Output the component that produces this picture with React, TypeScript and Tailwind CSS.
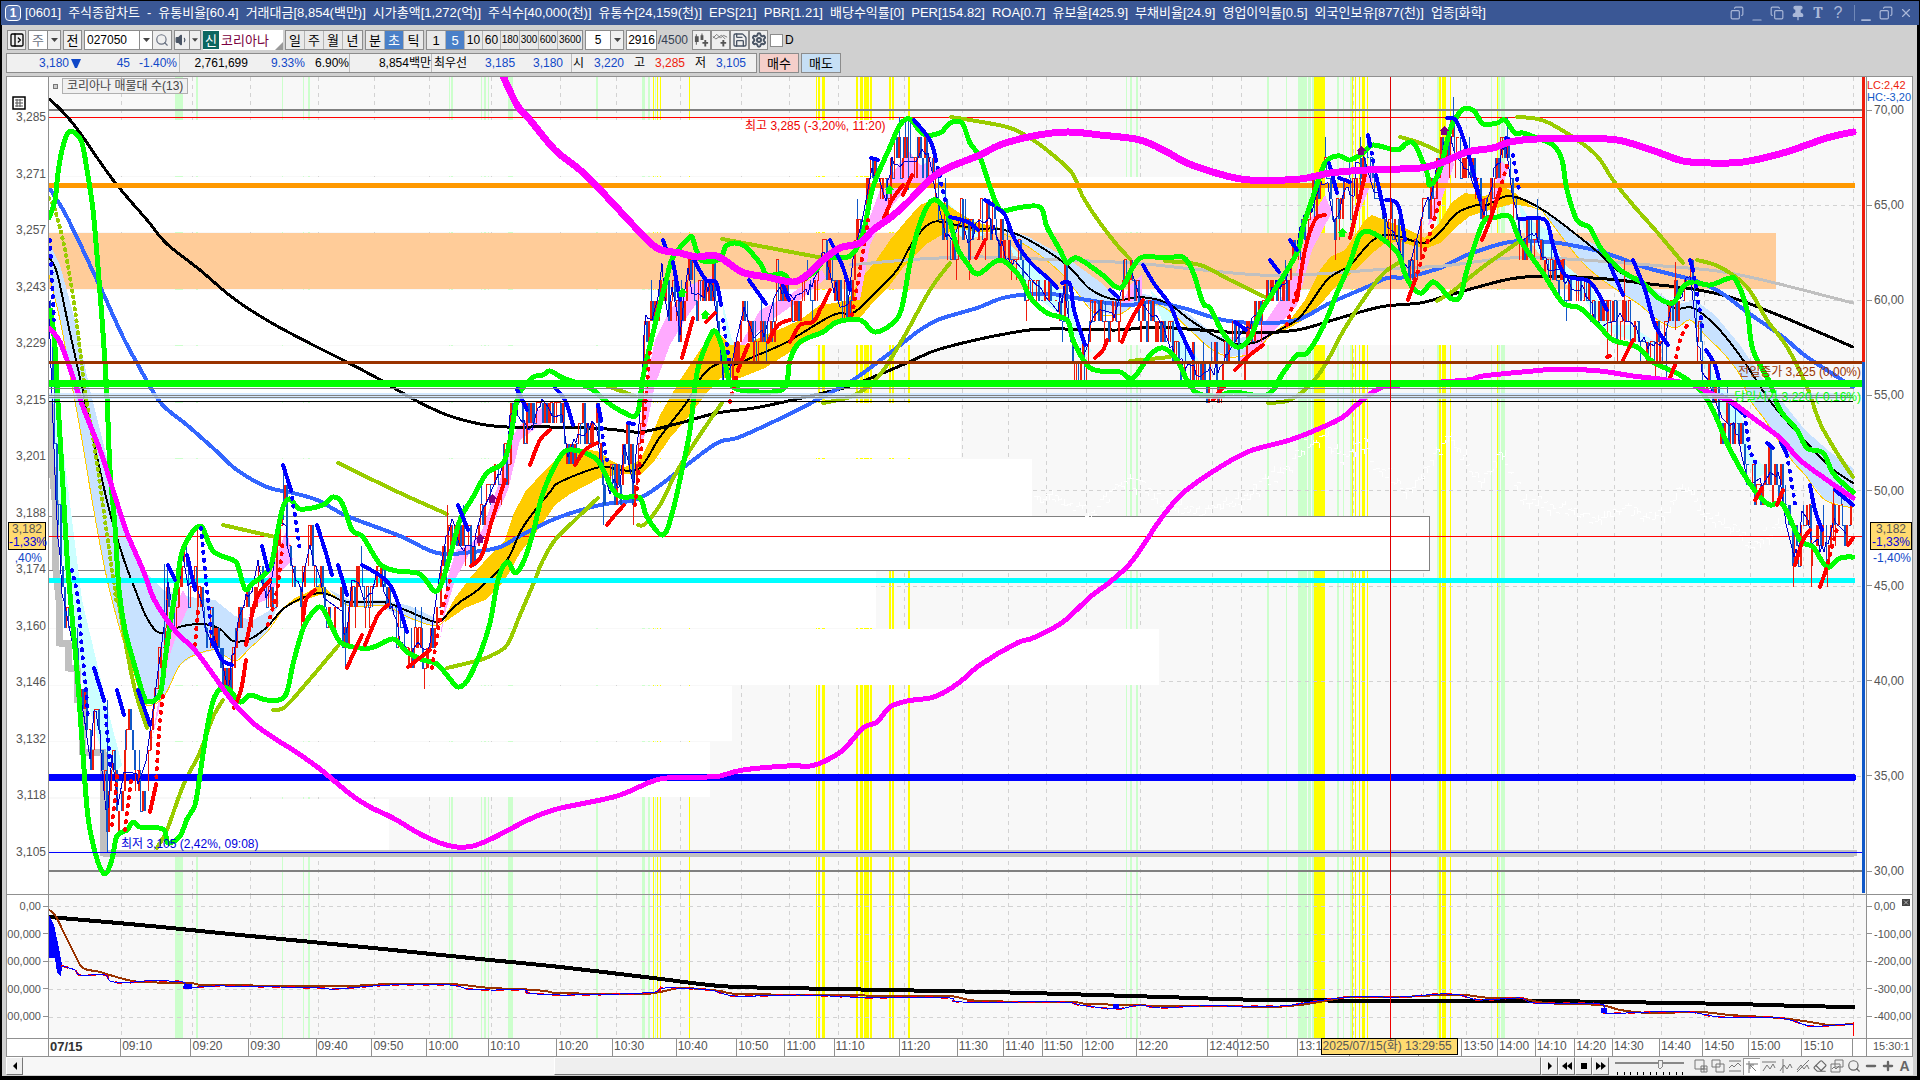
import type { ReactNode } from "react";
import {
  ChevronDown,
  Copy,
  Eraser,
  Minus,
  PanelLeftOpen,
  Pin,
  Plus,
  Save,
  Search,
  Settings,
  Volume1,
  X,
} from "lucide-react";

type Pt = [number, number];

const TITLE = [
  "[0601]", "주식종합차트", "-", "유통비율[60.4]", "거래대금[8,854(백만)]", "시가총액[1,272(억)]", "주식수[40,000(천)]",
  "유통수[24,159(천)]", "EPS[21]", "PBR[1.21]", "배당수익률[0]", "PER[154.82]", "ROA[0.7]", "유보율[425.9]", "부채비율[24.9]",
  "영업이익률[0.5]", "외국인보유[877(천)]", "업종[화학]",
];

const PRICE_TICKS = ["3,285", "3,271", "3,257", "3,243", "3,229", "3,215", "3,201", "3,188", "3,174", "3,160", "3,146", "3,132", "3,118", "3,105"];
const RATE_TICKS = ["70,00", "65,00", "60,00", "55,00", "50,00", "45,00", "40,00", "35,00", "30,00"];
const SUB_LEFT = ["0,00", "00,000", "00,000", "00,000", "00,000"];
const SUB_RIGHT = ["0,00", "-100,00", "-200,00", "-300,00", "-400,00"];

// label, x where the cell starts
const TIMES: [string, number][] = [
  ["07/15", 48], ["09:10", 121], ["09:20", 192], ["09:30", 250], ["09:40", 318], ["09:50", 374], ["10:00", 429],
  ["10:10", 491], ["10:20", 560], ["10:30", 616], ["10:40", 680], ["10:50", 741], ["11:00", 789], ["11:10", 838],
  ["11:20", 904], ["11:30", 962], ["11:40", 1008], ["11:50", 1046], ["12:00", 1086], ["12:20", 1140], ["12:40", 1212],
  ["12:50", 1241], ["13:1", 1301], ["", 1353], ["", 1423], ["13:50", 1466], ["14:00", 1501], ["14:10", 1538],
  ["14:20", 1577], ["14:30", 1614], ["14:40", 1661], ["14:50", 1704], ["15:00", 1750], ["15:10", 1803], ["", 1853],
];
const PLOT_END = 1866;

// signal bands: x, width
const GREEN_BANDS: Pt[] = [
  [175, 8], [196, 2], [282, 1], [303, 1], [308, 2], [449, 1], [451, 2], [481, 1], [484, 2], [488, 1], [508, 5], [596, 2],
  [642, 3], [648, 2], [655, 1], [1126, 1], [1130, 2], [1136, 2], [1267, 2], [1286, 1], [1298, 9], [1308, 3], [1312, 2],
  [1337, 2], [1343, 1], [1350, 2], [1437, 2], [1491, 1], [1498, 2], [1501, 4],
];
const YELLOW_BANDS: Pt[] = [
  [653, 1], [657, 1], [660, 1], [689, 1], [816, 1], [818, 2], [822, 3], [856, 2], [860, 3], [864, 5], [870, 2], [889, 2],
  [892, 2], [908, 2], [1314, 11], [1352, 1], [1355, 1], [1359, 1], [1362, 3], [1367, 1], [1439, 2], [1442, 4], [1450, 1],
  [1497, 1],
];

// volume profile rows: top, bottom, right edge
const PROFILE: [number, number, number][] = [
  [120, 176, 915], [177, 232, 1241], [290, 345, 1600], [346, 402, 817], [403, 458, 961], [459, 516, 1032],
  [571, 628, 876], [629, 685, 1159], [686, 741, 732], [742, 797, 710], [799, 850, 389],
];

const MAGENTA_HIGH = "503,76 517,105 530,120 555,150 580,170 607,197 633,225 657,248 680,253 697,257 717,256 742,272 767,277 793,282 807,275 823,260 840,248 860,243 873,230 890,218 907,203 933,177 950,167 980,155 1000,145 1033,136 1067,132 1100,135 1140,140 1167,152 1187,163 1223,175 1250,180 1300,179 1330,173 1367,170 1420,168 1443,162 1467,152 1493,148 1510,142 1537,139 1607,139 1633,144 1660,153 1683,161 1710,163 1743,162 1783,153 1827,138 1853,132";
const MAGENTA_LOW = "50,329 60,342 73,377 83,407 100,450 113,490 127,533 143,570 153,597 163,614 177,633 193,648 207,666 233,702 253,723 277,740 293,750 320,769 350,794 370,807 393,818 420,834 440,843 457,847 473,846 493,838 530,819 557,809 617,796 660,779 707,777 720,776 743,770 787,766 810,766 823,762 843,750 863,728 877,722 890,707 907,701 930,698 943,693 960,682 980,665 1017,643 1033,638 1063,622 1090,597 1110,582 1133,560 1160,520 1183,493 1220,467 1250,451 1290,440 1323,427 1343,417 1360,402 1380,388 1400,385 1467,380 1483,376 1533,371 1560,369 1600,371 1633,376 1667,380 1693,385 1710,393 1733,403 1753,418 1780,438 1800,460 1827,480 1853,498";
const BLACK_LONG = "49,99 61,110 78,130 113,180 147,220 167,244 200,270 233,298 270,322 313,345 343,360 377,378 413,399 447,415 480,424 507,427 550,427 607,429 640,432 680,423 717,413 760,407 823,393 853,385 907,363 940,349 1010,333 1050,329 1117,330 1153,327 1200,330 1250,333 1297,330 1333,320 1380,307 1420,303 1443,297 1467,290 1510,279 1547,276 1607,279 1650,284 1693,289 1733,298 1783,317 1853,347";
const BLACK_MID = "49,258 57,273 70,333 82,387 97,457 110,513 123,557 138,597 147,618 160,633 183,626 203,624 220,629 233,641 250,639 267,627 287,606 320,593 347,602 383,602 410,612 437,622 450,611 460,602 480,588 507,560 523,527 550,492 560,482 600,467 620,470 640,468 660,437 687,402 703,375 720,363 733,365 753,357 787,342 833,315 853,313 873,295 897,270 913,242 933,222 960,226 977,229 1000,229 1027,239 1067,265 1090,289 1117,300 1140,297 1167,303 1193,322 1227,342 1253,343 1273,333 1300,317 1327,280 1350,265 1373,240 1393,235 1423,243 1440,232 1457,213 1477,205 1487,205 1510,196 1543,210 1593,248 1617,270 1647,288 1673,308 1693,308 1717,327 1743,360 1767,397 1783,417 1807,443 1830,467 1853,483";
const BLUE_MA = "50,189 67,217 97,280 123,337 137,363 160,402 187,425 213,448 237,470 267,487 293,493 317,500 347,516 400,536 437,553 473,552 500,547 520,536 557,518 600,505 640,498 680,470 717,443 737,438 773,422 813,402 853,380 890,353 920,330 940,319 977,308 1007,297 1050,294 1087,300 1127,305 1153,302 1183,308 1223,320 1260,323 1297,320 1330,303 1367,287 1387,278 1407,277 1440,268 1467,255 1510,242 1550,242 1590,249 1617,257 1647,268 1693,280 1720,292 1747,312 1783,337 1807,357 1853,387";
const SILVER_MA = "850,265 920,259 983,257 1060,260 1133,263 1193,269 1260,275 1317,274 1400,268 1443,266 1510,258 1567,259 1650,265 1717,271 1767,281 1853,303";
const BAND_UPPER = "49,218 55,200 58,173 62,150 68,133 75,133 82,143 87,170 93,210 98,267 103,333 107,397 110,470 115,527 119,590 125,630 133,660 143,694 148,702 160,694 165,660 170,625 177,583 183,549 200,526 213,551 233,560 238,566 245,589 253,583 270,568 277,534 283,507 290,499 300,509 323,505 333,497 342,503 352,530 363,537 380,564 397,571 420,574 437,591 450,556 460,520 473,497 487,473 503,463 510,440 518,397 532,378 543,375 550,371 563,378 590,388 607,402 623,412 637,414 643,377 653,333 667,277 673,257 687,240 692,237 697,252 703,261 720,259 727,245 743,245 760,263 767,275 783,274 793,282 813,273 827,258 850,256 863,233 873,187 890,147 900,125 910,119 923,134 940,133 950,123 962,123 970,143 980,157 990,187 997,205 1003,211 1017,208 1040,207 1047,227 1060,250 1067,263 1077,258 1100,273 1120,288 1133,267 1143,257 1167,258 1183,257 1193,272 1203,303 1210,308 1223,333 1237,347 1250,338 1260,313 1270,297 1297,253 1303,227 1313,197 1323,167 1330,158 1340,156 1350,160 1363,153 1373,145 1397,150 1407,143 1415,145 1427,173 1430,185 1440,170 1450,130 1460,112 1467,108 1475,112 1483,124 1497,123 1505,120 1515,133 1523,133 1537,138 1553,145 1562,160 1567,190 1577,220 1590,228 1600,247 1620,270 1643,283 1657,297 1673,303 1683,287 1693,282 1710,285 1730,278 1737,282 1747,310 1753,350 1770,383 1780,410 1797,430 1807,448 1823,453 1833,473 1847,487 1853,492";
const BAND_LOWER = "51,310 55,347 58,403 63,487 68,570 77,671 82,740 88,817 97,859 105,874 112,859 117,836 127,830 133,822 140,827 163,829 168,843 180,836 187,819 195,805 200,775 207,729 215,696 227,688 240,702 250,695 267,700 285,696 293,664 303,629 313,612 322,608 333,629 343,644 370,648 393,639 407,652 423,660 437,664 450,679 458,687 467,681 480,654 490,623 498,580 507,562 515,573 523,563 533,533 543,493 560,457 573,450 597,460 613,490 623,497 640,498 647,517 663,535 673,510 682,470 690,430 697,373 707,343 715,331 723,350 730,383 747,391 783,389 790,360 800,342 823,332 837,322 860,320 875,332 893,323 902,307 910,263 920,223 933,200 947,213 957,247 967,263 978,274 1000,260 1020,277 1030,297 1047,313 1067,320 1073,340 1087,365 1100,371 1120,372 1133,378 1150,355 1163,348 1177,360 1187,380 1197,393 1217,396 1233,392 1267,395 1283,373 1297,355 1307,353 1323,327 1337,293 1350,263 1360,235 1373,233 1397,252 1405,274 1413,288 1422,293 1432,282 1440,287 1450,298 1460,297 1467,270 1483,223 1497,217 1510,217 1520,240 1543,273 1563,303 1580,308 1600,327 1613,340 1637,347 1653,362 1680,375 1700,390 1713,410 1727,443 1743,473 1760,497 1770,505 1783,505 1800,540 1813,547 1827,567 1840,558 1853,557";

const OLIVE = [
  "117,590 125,640 135,690 147,728",
  "157,848 167,830 183,786 200,752 213,717 223,700",
  "223,525 275,537",
  "273,710 281,709 292,700 338,646",
  "338,463 400,493 447,514",
  "447,668 480,660 492,655 507,645 520,615 535,580 542,562 555,540 575,520 598,498",
  "607,386 635,396",
  "638,525 645,524 660,505 675,475 690,450 710,420 722,403",
  "722,239 770,248 823,258",
  "823,403 850,397 870,385 885,368 905,335 930,290 950,263",
  "951,117 1007,127 1033,140 1053,155 1072,173 1083,197 1100,223 1117,245 1130,259",
  "1130,361 1170,357",
  "1165,261 1200,265 1230,280 1265,297",
  "1268,403 1290,400 1310,385 1325,365 1345,328 1370,290 1385,272 1400,262",
  "1400,137 1420,143 1440,152",
  "1437,301 1453,291 1483,267 1517,243",
  "1517,117 1547,122 1593,152 1613,180 1633,205 1657,232 1683,263",
  "1697,260 1720,267 1747,287 1767,320 1787,347 1807,387 1820,423 1837,453 1853,477",
];

const GOLD_CLOUDS = [
  "285,606 295,598 308,592 320,584 332,594 320,595 300,601",
  "445,616 455,598 470,578 490,555 505,540 513,515 525,492 545,470 560,455 590,450 600,452 610,460 625,467 640,460 650,440 660,415 680,380 700,350 715,330 730,345 745,345 765,335 785,327 800,320 820,305 835,303 848,300 860,280 875,262 890,240 905,222 920,205 933,200 945,203 955,210 975,222 1000,228 990,232 975,232 960,228 940,236 925,245 905,265 890,285 875,300 860,318 840,322 820,332 790,352 765,368 740,378 720,378 705,395 690,415 670,438 655,460 640,475 620,474 600,478 570,494 555,505 540,527 520,553 505,580 485,600 465,608 445,622",
  "1270,335 1290,320 1305,300 1320,270 1330,257 1345,250 1355,235 1365,220 1372,215 1390,222 1405,228 1425,238 1440,222 1452,202 1465,193 1485,196 1505,187 1515,193 1530,205 1543,211 1530,207 1512,204 1490,210 1470,216 1455,228 1440,243 1425,249 1400,242 1385,243 1370,255 1355,270 1335,287 1320,305 1300,322 1280,333",
];
const BLUE_CLOUDS = [
  "49,243 60,265 75,320 90,390 105,450 120,510 130,540 143,570 163,590 190,597 215,600 235,616 253,620 267,612 280,600 267,632 250,648 235,661 215,650 195,655 180,665 165,695 152,705 143,700 130,660 120,630 105,570 92,500 82,440 72,385 60,320 49,275",
  "330,590 350,600 385,600 410,606 435,618 435,626 405,618 380,606 345,606",
  "1000,228 1027,236 1067,258 1100,282 1117,297 1140,293 1167,300 1190,315 1215,335 1240,338 1270,330 1253,352 1230,357 1210,348 1190,330 1165,308 1140,302 1120,314 1095,313 1075,290 1060,272 1030,248",
  "1543,210 1575,235 1600,247 1630,275 1655,290 1675,305 1695,300 1715,315 1740,345 1760,375 1785,405 1805,430 1830,452 1853,468 1853,508 1825,500 1805,475 1790,458 1765,420 1750,400 1740,375 1725,355 1705,335 1690,320 1675,328 1655,318 1640,305 1620,292 1600,278 1580,260 1545,215",
];
const GOLD_EDGES = [
  "49,275 60,320 72,385 82,440 92,500 105,570 120,630 130,660 143,700 152,705 165,695 180,665 195,655 215,650 235,661 250,648 267,632 285,606",
  "332,594 350,606 385,606 410,618 435,626 445,620",
  "1000,232 1030,248 1060,272 1075,290 1095,313 1120,314 1140,302 1165,308 1190,330 1210,348 1230,357 1253,352 1270,336",
  "1543,212 1580,260 1600,278 1620,292 1640,305 1655,318 1675,328 1690,320 1705,335 1725,355 1740,375 1750,400 1765,420 1790,458 1805,475 1825,500 1853,508",
];
const PINK_CLOUDS = [
  "152,740 160,690 166,650 174,610 183,590 190,604 180,625 170,655 160,705",
  "245,625 260,590 272,570 280,545 287,530 293,560 282,570 270,598 255,605",
  "440,640 447,580 456,550 470,545 482,530 500,480 510,440 520,425 545,405 550,415 540,425 520,440 508,490 490,530 470,552 455,580 446,610",
  "638,450 645,390 655,340 670,310 690,285 715,275 717,288 700,298 685,320 670,345 655,385 645,435",
  "740,345 760,310 790,295 822,270 826,278 800,300 765,325 744,345",
  "855,300 865,230 880,190 895,170 908,150 920,165 935,160 936,176 905,190 885,215 870,245 860,300",
  "1122,305 1130,285 1142,275 1142,298",
  "1235,365 1260,330 1280,300 1297,270 1310,220 1325,195 1332,212 1312,250 1297,305 1275,330 1250,355",
  "1352,220 1362,180 1370,165 1373,180 1360,210",
  "1428,225 1438,180 1449,140 1454,165 1445,190 1435,218",
  "1490,205 1502,160 1508,170 1498,200",
];
const CYAN_CLOUDS = [
  "50,380 62,440 72,520 82,600 95,655 108,710 122,765 112,775 98,740 82,680 70,610 58,520",
  "722,300 732,340 742,350 738,365 728,360",
  "938,175 950,205 965,220 985,235 965,240 948,225",
  "1010,245 1030,265 1055,285 1070,300 1085,345 1092,350 1085,358 1068,320 1040,300 1018,272",
  "1150,290 1170,310 1185,340 1200,362 1185,365 1170,340",
  "1518,200 1530,220 1548,230 1565,265 1590,285 1612,325 1630,325 1660,345 1630,340 1605,330 1585,300 1555,275 1525,235",
  "1700,350 1720,385 1740,410 1750,455 1770,470 1755,480 1735,430 1715,400",
];

const PRICE =
  "49,300 52,400 57,520 62,590 70,630 78,680 84,710 90,760 95,700 100,740 107,830 112,760 116,810 122,800 128,720 133,750 140,790 147,760 155,690 163,640 168,590 175,610 183,550 190,600 197,560 205,630 213,640 220,660 228,690 235,640 243,600 250,600 258,560 265,590 272,600 278,540 284,490 287,540 293,560 300,600 308,545 315,560 323,600 330,640 337,580 345,640 352,580 362,590 370,600 380,570 388,600 400,640 410,650 420,640 433,650 440,570 450,520 460,545 475,540 483,500 495,480 507,460 510,410 520,410 530,430 540,400 550,410 562,420 568,455 580,430 597,425 603,480 610,490 620,480 625,430 633,490 640,420 645,320 655,320 662,270 668,310 673,290 680,330 687,270 695,300 705,290 713,285 718,330 724,380 730,380 738,325 745,300 755,335 768,330 775,290 787,300 800,290 815,285 824,250 832,280 840,300 847,310 855,250 863,210 870,170 877,170 885,200 893,160 903,160 908,130 915,160 925,150 935,180 943,220 952,250 960,220 970,245 980,220 990,225 1000,245 1015,265 1030,290 1045,290 1055,310 1065,290 1073,350 1085,355 1095,310 1105,310 1117,320 1125,270 1135,280 1145,320 1160,320 1175,350 1185,370 1200,375 1215,370 1230,350 1245,335 1260,310 1275,285 1290,275 1300,225 1315,200 1325,170 1335,220 1345,190 1353,200 1357,160 1365,150 1375,190 1385,220 1397,230 1405,270 1413,260 1422,220 1432,190 1445,140 1450,135 1458,165 1470,165 1480,210 1487,210 1495,170 1505,145 1512,190 1520,240 1535,235 1545,260 1560,270 1570,290 1585,290 1595,320 1608,325 1620,320 1635,330 1650,345 1660,350 1675,300 1690,280 1697,340 1705,380 1715,400 1725,420 1737,430 1745,470 1755,490 1770,470 1780,480 1790,540 1797,560 1803,510 1812,540 1825,550 1833,520 1845,530 1854,500";

const SAR_DOWN = [
  "94,668 104,700", "117,690 124,715", "138,690 150,725", "168,565 175,580", "187,555 195,590", "212,640 222,660 232,665",
  "262,546 268,570", "283,465 291,490", "317,525 325,550 332,575", "338,565 347,595", "362,565 390,585 407,632",
  "458,505 468,530", "517,389 527,410", "555,388 565,400 573,425", "598,405 601,420", "628,423 634,424", "663,240 667,252",
  "673,262 680,300", "694,260 706,280 716,282 721,305", "749,280 766,304", "783,285 789,300", "830,240 842,265 850,290",
  "871,158 878,160", "914,120 930,140 936,160", "950,217 968,222 978,230", "985,200 993,205",
  "997,208 1005,215 1015,240 1030,262 1050,280 1057,288", "1062,283 1070,284 1074,310 1085,345", "1110,290 1118,297",
  "1143,265 1155,285 1170,305 1180,330 1193,358", "1235,322 1246,330", "1270,260 1279,272", "1290,240 1297,250",
  "1329,163 1337,193", "1339,178 1350,182", "1368,135 1370,145", "1376,175 1385,215", "1386,200 1398,205 1405,240",
  "1447,118 1457,122 1470,160 1480,200", "1506,138 1510,140", "1520,219 1545,220 1553,245 1565,275 1590,282 1607,310",
  "1610,265 1623,295", "1633,260 1645,290 1655,325 1668,345", "1690,260 1693,270", "1706,350 1715,365 1720,385",
  "1722,395 1745,415", "1767,443 1773,448", "1781,442 1787,455", "1810,485 1815,510 1822,530", "1835,490 1853,505",
];
const SAR_DOWN_DOTS = [
  "50,240 54,320", "72,570 78,600 82,650 86,690 88,720", "104,700 108,740 110,765", "201,528 206,580 212,640",
  "291,490 297,530 300,550", "601,420 603,440 607,460", "723,320 730,365", "936,160 945,200", "1370,145 1376,175",
  "1513,155 1519,190", "1693,270 1703,330", "1745,415 1750,450 1757,465", "1787,455 1796,510",
];
const SAR_UP = [
  "150,812 156,785", "234,708 241,690 246,660", "246,645 256,600 270,580", "303,620 306,600 315,590",
  "347,668 355,650 362,635", "365,645 378,615 388,605", "408,667 430,650", "471,566 482,555 492,520 505,480",
  "530,465 540,440 550,430", "575,465 585,450 597,443", "607,525 615,515 624,505", "682,358 687,340 693,318",
  "706,322 715,313", "738,370 748,345", "768,342 778,325 790,320", "790,342 800,325 813,322 820,310 830,290",
  "884,218 892,200 903,185", "903,195 912,175", "976,258 985,240", "1095,358 1103,350 1107,340", "1122,342 1130,322 1143,300",
  "1213,400 1225,385", "1235,370 1250,355 1263,345", "1297,300 1305,250 1315,220 1325,215", "1350,238 1358,205 1365,175",
  "1408,300 1415,280", "1482,240 1490,220 1500,190", "1607,357 1610,356", "1623,360 1633,340", "1670,378 1675,365",
  "1755,500 1762,488", "1777,505 1783,490", "1795,565 1803,540 1810,530", "1820,587 1826,570", "1848,545 1853,538",
];
const SAR_UP_DOTS = [
  "112,825 118,770", "125,830 131,780", "156,785 160,720 164,690", "195,645 198,610", "268,625 277,590 283,540",
  "432,668 440,620 450,580", "635,505 640,460 645,410 650,350", "730,402 738,370", "852,315 860,270 868,220",
  "1287,325 1297,290", "1415,280 1425,250 1440,200", "1500,190 1507,165", "1675,365 1680,340 1690,320", "1826,570 1838,525",
];

const GHOST = "1032,500 1065,500 1090,514 1110,495 1125,482 1140,485 1165,505 1200,514 1240,500 1260,485 1275,475 1290,465 1300,447 1315,440 1325,438 1340,460 1350,455 1357,445 1365,443 1375,470 1390,475 1405,495 1420,480 1430,460 1447,438 1460,455 1480,485 1495,460 1503,455 1520,495 1560,510 1600,520 1620,510 1665,515 1675,490 1690,490 1700,515 1740,530 1745,545 1780,525 1800,545";

const SUB_BLACK = "49,917 140,925 240,935 373,948 480,959 560,967 653,978 720,986 783,988 940,991 1030,993 1163,997 1267,1000 1430,1001 1533,1001 1613,1002 1733,1004 1800,1006 1855,1007";
const SUB_BROWN = "49,910 55,915 65,935 75,955 83,968 100,972 120,978 140,982 190,983 210,985 340,986 390,984 450,984 490,988 520,989 545,991 560,993 640,994 660,992 680,988 700,989 720,991 740,994 830,995 900,996 950,996 980,1001 1070,1002 1090,1004 1170,1006 1220,1006 1270,1007 1300,1005 1330,1000 1350,997 1400,997 1440,995 1465,995 1490,998 1520,998 1545,1003 1600,1005 1620,1010 1650,1013 1700,1012 1730,1015 1780,1018 1810,1022 1830,1025 1853,1024";
const SUB_BLUE = "62,966 75,970 80,975 105,975 110,981 125,983 145,981 183,982 185,988 215,986 280,987 320,988 335,989 390,985 450,985 468,989 490,990 525,990 528,993 560,995 620,994 655,992 665,988 710,990 735,996 800,995 850,997 880,998 900,997 950,998 962,1002 1060,1002 1080,1005 1116,1009 1140,1005 1160,1008 1200,1006 1280,1006 1310,1002 1350,997 1400,997 1440,994 1460,995 1480,1000 1520,998 1535,1003 1600,1004 1605,1013 1650,1012 1690,1012 1720,1017 1780,1018 1810,1026 1835,1025 1853,1024";

const parse = (s: string): Pt[] => s.split(" ").map((p) => p.split(",").map(Number) as Pt);

// Catmull-Rom through the points
function smooth(s: string) {
  const p = parse(s);
  let d = `M${p[0][0]},${p[0][1]}`;
  for (let i = 0; i < p.length - 1; i++) {
    const a = p[i - 1] ?? p[i];
    const b = p[i];
    const c = p[i + 1];
    const e = p[i + 2] ?? c;
    d += `C${b[0] + (c[0] - a[0]) / 6},${b[1] + (c[1] - a[1]) / 6} ${c[0] - (e[0] - b[0]) / 6},${c[1] - (e[1] - b[1]) / 6} ${c[0]},${c[1]}`;
  }
  return d;
}

function sampler(s: string) {
  const p = parse(s);
  return (x: number) => {
    const i = Math.max(1, p.findIndex((q) => q[0] >= x));
    const [x0, y0] = p[i - 1];
    const [x1, y1] = p[i];
    return y0 + ((y1 - y0) * (x - x0)) / (x1 - x0);
  };
}

function random(seed: number) {
  let n = seed;
  return () => {
    n = (n * 1664525 + 1013904223) % 4294967296;
    return n / 4294967296;
  };
}

const STEP = 20.42;

function buildCandles() {
  const at = sampler(PRICE);
  const rnd = random(11);
  const out = { red: "", redBody: "", blue: "", blueBody: "", line: "M49,300" };
  let prev = at(49);
  for (let x = 50; x < 1854; x += 2) {
    const raw = at(x) + (rnd() - 0.5) * 44;
    const y = Math.round((raw - 117) / STEP) * STEP + 117;
    const flat = y === prev;
    const up = y < prev || (flat && rnd() > 0.35);
    const body = rnd() > 0.45;
    const from = flat && rnd() > 0.5 ? y + STEP : prev;
    if (up) {
      if (body) out.redBody += `M${x + 1},${from}V${y}`;
      else out.red += `M${x}.5,${from}V${y}h2`;
    } else if (body) {
      out.blueBody += `M${x + 1},${from}V${y}`;
    } else {
      out.blue += `M${x}.5,${from}V${y}h2`;
    }
    if (rnd() > 0.88) out.red += `M${x + 1}.5,${y}v${STEP}`;
    if (rnd() > 0.92) out.blue += `M${x + 1}.5,${y - STEP}v${STEP}`;
    if (rnd() > 0.4) out.line += `L${x},${at(x) + (rnd() - 0.5) * 16}`;
    prev = y;
  }
  return out;
}

function buildGhost() {
  const at = sampler(GHOST);
  const rnd = random(5);
  let d = "";
  for (let x = 1034; x < 1798; x += 3) d += `M${x},${at(x) + (rnd() - 0.5) * 12}h3v${(rnd() - 0.5) * 14}`;
  return d;
}

const CANDLES = buildCandles();
const GHOST_PATH = buildGhost();

function Line({ d, color, w, dash, cap = "round" }: { d: string; color: string; w: number; dash?: string; cap?: "round" | "butt" }) {
  return <path d={d} fill="none" stroke={color} strokeWidth={w} strokeLinejoin="round" strokeLinecap={cap} strokeDasharray={dash} />;
}

function Bands({ top, height }: { top: number; height: number }) {
  return (
    <>
      {TIMES.slice(1).map(([, x]) => (
        <Line key={x} d={`M${x + 0.5},${top}v${height}`} color="#d2d2d2" w={1} dash="4 4" cap="butt" />
      ))}
      {GREEN_BANDS.map(([x, w]) => (
        <rect key={x} x={x} y={top} width={w} height={height} fill="#ccffcc" />
      ))}
      {YELLOW_BANDS.map(([x, w]) => (
        <rect key={x} x={x} y={top} width={w} height={height} fill="#ffff00" />
      ))}
    </>
  );
}

function Arrow({ x, y, color }: { x: number; y: number; color: string }) {
  return <path d={`M${x},${y - 5}l5,5h-2v4h-6v-4h-2z`} fill={color} />;
}

function MainPlot() {
  return (
    <svg viewBox="49 77 1817 817" preserveAspectRatio="none" shapeRendering="crispEdges" className="block h-full w-full bg-[#f8f8f8]">
      <Bands top={77} height={817} />
      {[205, 300, 395, 490, 586, 681, 776].map((y) => (
        <Line key={y} d={`M49,${y + 0.5}H1862`} color="#d2d2d2" w={1} dash="4 4" cap="butt" />
      ))}
      {PROFILE.map(([t, b, r]) => (
        <rect key={t} x={49} y={t} width={r - 49} height={b - t} fill="#fff" />
      ))}
      <rect x={49} y={233} width={1727} height={56} fill="#ffcc99" />
      <path d="M48,516.5H1429.500V570.500H48" fill="#fff" stroke="#808080" />
      <Line d={GHOST_PATH} color="#fff" w={1} />

      {CYAN_CLOUDS.map((p) => <polygon key={p} points={p} fill="#ccffff" />)}
      {BLUE_CLOUDS.map((p) => <polygon key={p} points={p} fill="#c8e2ff" />)}
      {GOLD_CLOUDS.map((p) => <polygon key={p} points={p} fill="#ffcc00" />)}
      {PINK_CLOUDS.map((p) => <polygon key={p} points={p} fill="#ffaaff" />)}
      {GOLD_EDGES.map((p) => <Line key={p} d={smooth(p)} color="#ffcc00" w={1} />)}

      <Line d="M50,404V445L55,500V560L59,600V643H68V668H77V700H82V752H103V853H1854" color="#c0c0c0" w={7} />
      <Line d="M49,110H1862M49,871H1862" color="#808080" w={2} cap="butt" />
      <Line d="M49,117.500H1862M49,536.500H1862" color="#ff0000" w={1} cap="butt" />

      <Line d={smooth(BLACK_LONG)} color="#000" w={3} />
      <Line d={smooth(BLUE_MA)} color="#3366ff" w={4} />
      <Line d={smooth(SILVER_MA)} color="#c0c0c0" w={3} />
      <Line d={smooth(BLACK_MID)} color="#000" w={2} />
      <Line d={smooth("49,198 55,210 65,250 75,310 85,390 95,450 105,520 112,570 117,605")} color="#99cc00" w={4} dash="1 5" />
      {OLIVE.map((p) => <Line key={p} d={smooth(p)} color="#99cc00" w={4} />)}
      <Line d="M49,185.500H1853" color="#ff9900" w={5} />
      <Line d="M49,580.500H1853" color="#00ffff" w={5} />
      <Line d="M49,777.500H1853" color="#0000ff" w={7} />

      <Line d={CANDLES.blueBody} color="#1058c8" w={2} cap="butt" />
      <Line d={CANDLES.redBody} color="#ee1c0c" w={2} cap="butt" />
      <Line d={CANDLES.blue} color="#1058c8" w={1} cap="butt" />
      <Line d={CANDLES.red} color="#ee1c0c" w={1} cap="butt" />
      <Line d={CANDLES.line} color="#0000cc" w={1} />
      <Line d="M107.500,700V852M164.500,564V640M283.500,463V520M345.500,600V667M603.500,460V525M908.500,117V190M1360.500,137V200M1666.500,330V380" color="#1058c8" w={1} />
      <Line d="M197.500,526V620M447.500,505V560M1607.500,300V357M1624.500,260V340M1675.500,262V330M1811.500,540V587M1833.500,485V540" color="#ee1c0c" w={1} />
      <Line d={smooth(BAND_UPPER)} color="#00ff00" w={5} />
      <Line d={smooth(BAND_LOWER)} color="#00ff00" w={5} />
      {SAR_DOWN.map((p) => <Line key={p} d={smooth(p)} color="#0000ff" w={4} />)}
      {SAR_DOWN_DOTS.map((p) => <Line key={p} d={smooth(p)} color="#0000ff" w={4} dash="1 7" />)}
      {SAR_UP.map((p) => <Line key={p} d={smooth(p)} color="#ff0000" w={4} />)}
      {SAR_UP_DOTS.map((p) => <Line key={p} d={smooth(p)} color="#ff0000" w={4} dash="1 7" />)}
      <Line d={smooth(MAGENTA_HIGH)} color="#ff00ff" w={7} />
      <Line d={smooth(MAGENTA_LOW)} color="#ff00ff" w={5} />

      <Line d="M49,362.500H1862" color="#993300" w={3} cap="butt" />
      <rect x={49} y={393} width={1804} height={6} fill="#c8e2ff" fillOpacity={0.8} />
      <Line d="M49,388.500H1853M49,395.500H1853M49,397.500H1853" color="#808080" w={1} cap="butt" />
      <Line d="M49,401.500H1853" color="#000" w={1} cap="butt" />
      <Line d="M49,383.500H1862" color="#00ff00" w={7} cap="butt" />
      <Line d="M49,852.500H1862" color="#0000ff" w={1} cap="butt" />

      <Arrow x={682} y={293} color="#00ff00" />
      <Arrow x={705} y={315} color="#00ff00" />
      <Arrow x={889} y={190} color="#00ff00" />
      <Arrow x={1342} y={233} color="#00ff00" />
      <Arrow x={492} y={499} color="#800080" />
      <Arrow x={480} y={539} color="#800080" />
      <Arrow x={1361} y={151} color="#800080" />
      <Arrow x={1444} y={131} color="#800080" />

      <rect x={1862} y={77} width={3} height={285} fill="#ee1c0c" />
      <rect x={1862} y={362} width={3} height={531} fill="#1058c8" />
      <Line d="M1390.500,77V894" color="#dd0000" w={1} cap="butt" />

      <g fontSize="12" fontFamily='"Liberation Sans", "Noto Sans CJK KR", sans-serif'>
        <text x={745} y={130} fill="#ee0000">최고 3,285 (-3,20%, 11:20)</text>
        <text x={121} y={848} fill="#0000dd">최저 3,105 (2,42%, 09:08)</text>
        <text x={1861} y={376} fill="#993300" textAnchor="end">전일종가 3,225 (0,00%)</text>
        <text x={1861} y={401} fill="#00ff00" textAnchor="end">당일시가 3,220 (-0,16%)</text>
      </g>
    </svg>
  );
}

function SubPlot() {
  return (
    <svg viewBox="49 895 1817 143" preserveAspectRatio="none" shapeRendering="crispEdges" className="block h-full w-full bg-[#f8f8f8]">
      <Bands top={895} height={143} />
      {[906, 934, 961, 989, 1017].map((y) => (
        <Line key={y} d={`M49,${y + 0.5}H1862`} color="#d2d2d2" w={1} dash="4 4" cap="butt" />
      ))}
      <Line d={smooth(SUB_BLACK)} color="#000" w={4} cap="butt" />
      <polygon points="49,915 54,925 59,948 62,965 61,977 57,972 55,958 49,958" fill="#0000ff" />
      <Line d={smooth(SUB_BROWN)} color="#993300" w={2} />
      <Line d={smooth(SUB_BLUE)} color="#ff0000" w={2} dash="6 9" />
      <Line d={smooth(SUB_BLUE)} color="#0000ff" w={1} />
      <rect x={184} y={984} width={8} height={5} fill="#0000ff" />
      <rect x={1113} y={1004} width={6} height={5} fill="#0000ff" />
      <rect x={1601} y={1008} width={6} height={5} fill="#0000ff" />
      <Line d="M1853.500,1022V1036M660.500,986V992" color="#ff0000" w={1} />
      <Line d="M1390.500,895V1038" color="#ee0000" w={1} cap="butt" />
    </svg>
  );
}

function Btn({ children, className = "", label }: { children?: ReactNode; className?: string; label?: string }) {
  return (
    <button
      type="button"
      aria-label={label}
      className={`flex h-5 shrink-0 items-center justify-center border border-[#8c8c8c] text-[13px] leading-none whitespace-nowrap ${className || "w-[19px] bg-[#efefef]"}`}
    >
      {children}
    </button>
  );
}

// width goes with the number of characters
const CELL = ["", "w-[19px] text-[13px]", "w-[18px] text-[12px]", "w-[19px] text-[10px]", "w-[24px] text-[10px]"];

function Segment({ items, active }: { items: string[]; active?: string }) {
  return (
    <div className="flex h-5 shrink-0 border border-[#8c8c8c]">
      {items.map((t) => (
        <button
          key={t}
          type="button"
          className={`flex items-center justify-center border-r border-[#b4b4b4] leading-none last:border-r-0 ${CELL[t.length]} ${t === active ? "bg-[#4a80c8] text-white" : "bg-[#e9e9e9]"}`}
        >
          {t}
        </button>
      ))}
    </div>
  );
}

function TitleBar() {
  return (
    <header className="flex h-6 shrink-0 items-center bg-[#3a5795] px-1 text-white">
      <span className="mr-1 flex h-4 w-4 items-center justify-center rounded-sm border border-white bg-[#5a78b5] text-[12px] leading-none font-bold">1</span>
      <h1 className="flex min-w-0 flex-1 gap-[7px] overflow-hidden text-[13px] leading-6 font-normal whitespace-nowrap">
        {TITLE.map((t) => <span key={t}>{t}</span>)}
      </h1>
      <div className="flex items-center gap-1 text-[#aab8d8]">
        <button type="button" aria-label="분리" className="w-4"><Copy className="h-3.5 w-3.5 -scale-x-100" /></button>
        <button type="button" aria-label="내리기" className="h-4 w-4 pt-2"><Minus className="h-3.5 w-3.5" /></button>
        <button type="button" aria-label="복사" className="w-4"><Copy className="h-3.5 w-3.5" /></button>
        <button type="button" aria-label="고정" className="w-4"><Pin className="h-4 w-4 fill-current" /></button>
        <button type="button" className="w-4 font-serif text-[16px] leading-4 font-bold">T</button>
        <button type="button" className="mr-1 w-4 text-[16px] leading-4">?</button>
        <span className="h-4 border-l border-[#7088b8]" />
        <button type="button" aria-label="최소화" className="h-4 w-4 pt-2"><Minus className="h-3.5 w-3.5" strokeWidth={3} /></button>
        <button type="button" aria-label="이전 크기" className="w-4"><Copy className="h-3.5 w-3.5 -scale-x-100" /></button>
        <button type="button" aria-label="닫기" className="w-4"><X className="h-3.5 w-3.5" /></button>
      </div>
    </header>
  );
}

function Caret({ className = "h-1 w-[7px]" }: { className?: string }) {
  return <svg viewBox="0 0 7 4" className={className} fill="#444"><path d="M0 0h7L3.500 4z" /></svg>;
}

function Toolbar() {
  return (
    <div className="flex h-5 items-center gap-0.5 pl-px">
      <Btn label="패널"><PanelLeftOpen className="h-4 w-4" /></Btn>
      <div className="flex">
        <Btn className="w-5 bg-white text-gray-500">주</Btn>
        <Btn className="-ml-px w-3.5 bg-[#efefef]" label="목록"><Caret /></Btn>
      </div>
      <Btn>전</Btn>
      <div className="flex">
        <input aria-label="종목코드" defaultValue="027050" className="h-5 w-[56px] border border-[#8c8c8c] bg-white pl-0.5 text-[12px] leading-none" />
        <Btn className="-ml-px w-3.5 bg-white" label="최근 종목"><Caret /></Btn>
        <Btn className="-ml-px w-5 bg-[#efefef]" label="찾기"><Search className="h-3.5 w-3.5 text-gray-500" /></Btn>
      </div>
      <div className="flex">
        <Btn className="w-4 bg-[#efefef]" label="소리"><Volume1 className="h-4 w-4 fill-current text-gray-600" /></Btn>
        <Btn className="-ml-px w-3 bg-[#efefef]" label="소리 목록"><Caret className="h-1 w-1.5" /></Btn>
      </div>
      <div className="relative flex h-5 w-[80px] items-center bg-white text-[13px] leading-none whitespace-nowrap text-[#7a0040]">
        <span className="mr-0.5 flex h-[18px] w-4 shrink-0 items-center justify-center bg-[#0c6660] text-white">신</span>
        코리아나
        <svg viewBox="0 0 8 8" className="absolute right-0 bottom-0 h-2 w-2" fill="#999"><path d="M8 0v8H0z" /></svg>
      </div>
      <Segment items={["일", "주", "월", "년"]} />
      <Segment items={["분", "초", "틱"]} active="초" />
      <Segment items={["1", "5", "10", "60", "180", "300", "600", "3600"]} active="5" />
      <div className="flex">
        <input aria-label="주기" defaultValue="5" className="h-5 w-[26px] border border-[#8c8c8c] bg-white text-center text-[12px] leading-none" />
        <Btn className="-ml-px w-3.5 bg-[#efefef]" label="주기 목록"><Caret /></Btn>
      </div>
      <label className="flex items-center text-[12px] leading-none text-gray-700">
        <input aria-label="봉 개수" defaultValue="2916" className="mr-px h-5 w-[31px] border border-[#8c8c8c] bg-white text-center text-[12px] text-black" />
        /4500
      </label>
      <div className="ml-0.5 flex">
        <Btn label="지표 추가">
          <svg viewBox="0 0 18 18" className="h-[18px] w-[18px]" fill="#555"><path d="M3 3h1v2h2v6H4v3H3v-3H2V5h1zM9 2h1v2h1v5H8V4h1zM12 9h2v2h2v2h-2v3h-2v-3h-2v-2h2z" /></svg>
        </Btn>
        <Btn label="신호 추가">
          <svg viewBox="0 0 18 18" className="h-[18px] w-[18px]"><path d="M1 7l4-4 4 4 3-3 4 2M1 5l3 3 6-4 4 4" fill="none" stroke="#777" /><path d="M11 9h2v2h2v2h-2v3h-2v-3H9v-2h2z" fill="#555" /></svg>
        </Btn>
        <Btn label="저장"><Save className="h-4 w-4 text-gray-600" /></Btn>
        <Btn label="설정"><Settings className="h-4 w-4 text-gray-600" strokeWidth={3} /></Btn>
      </div>
      <label className="flex items-center gap-0.5 text-[12px] leading-none">
        <input type="checkbox" className="h-[13px] w-[13px] appearance-none border border-[#8c8c8c] bg-white" />D
      </label>
    </div>
  );
}

const BLUE = "text-[#1048c8]";

function QuoteBar() {
  return (
    <div className="flex h-5 items-center gap-0.5 text-[12px] leading-none whitespace-nowrap">
      <div className="flex h-5 border border-[#8c8c8c] bg-[#f0f0f0] [&>div]:flex [&>div]:items-center [&>div]:border-r [&>div]:border-[#bbb] [&>div:last-child]:border-r-0">
        <div className={`w-[173px] justify-end pr-0.5 ${BLUE}`}>
          <span className="flex items-center gap-0.5">3,180<svg viewBox="0 0 10 9" className="h-[9px] w-[10px]"><path d="M0 0h10L6 9H4z" fill="#1048c8" /></svg></span>
          <span className="w-[49px] text-right">45</span>
          <span className="w-[47px] text-right">-1.40%</span>
        </div>
        <div className="w-[170px] justify-end gap-2.5">
          <span>2,761,699</span>
          <span className={`w-[47px] text-right ${BLUE}`}>9.33%</span>
          <span>6.90%</span>
        </div>
        <div className="w-[82px] justify-end">8,854백만</div>
        <div className="w-[140px] justify-between pr-2 pl-0.5">
          <span>최우선</span>
          <span className={BLUE}>3,185</span>
          <span className={BLUE}>3,180</span>
        </div>
        <div className="w-[184px] justify-between pr-2.5 pl-px">
          <span>시</span><span className={BLUE}>3,220</span>
          <span>고</span><span className="text-[#ee1c0c]">3,285</span>
          <span>저</span><span className={BLUE}>3,105</span>
        </div>
      </div>
      <Btn className="w-10 bg-[#f5cfca]">매수</Btn>
      <Btn className="w-10 bg-[#c6dff5]">매도</Btn>
    </div>
  );
}

function PriceBadge({ className }: { className: string }) {
  return (
    <div className={`absolute border border-black bg-[#ffdb70] text-center text-[12px] leading-[13px] ${className}`}>
      <p className="text-[#555]">3,182</p>
      <p className="text-[#0000dd]">-1,33%</p>
    </div>
  );
}

function Chart() {
  return (
    <main className="flex min-h-0 flex-1 flex-col border border-[#909090] bg-white text-[12px] leading-none text-[#555]">
      <div className="flex min-h-0 flex-1 border-b border-[#909090]">
        <div className="relative flex w-[42px] shrink-0 flex-col justify-between border-r border-[#909090] pt-[33px] pr-0.5 pb-[35px] text-right">
          {PRICE_TICKS.map((t) => <span key={t} className="leading-[14px]">{t}</span>)}
          <svg viewBox="0 0 14 14" className="absolute top-[19px] left-[5px] h-3.5 w-3.5"><path d="M1 1h12v12H1z" fill="#fff" stroke="#000" strokeWidth="1.500" /><path d="M3 4h8M3 7h8M3 10h8M5 3v8M8 3v8" stroke="#555" /></svg>
          <span className="absolute top-[475px] right-1.5 text-[#1048c8]">,40%</span>
          <PriceBadge className="top-[445px] left-px w-[38px]" />
        </div>
        <div className="relative min-w-0 flex-1">
          <MainPlot />
          <div className="absolute top-px left-1 flex items-center gap-1">
            <span className="h-[5px] w-[5px] border border-[#777] bg-[#ccc]" />
            <span className="border border-[#b0b0b0] bg-[#f0f0f0] px-1 text-[12px] leading-[14px] whitespace-nowrap text-[#444]">코리아나 매물대 수(13)</span>
          </div>
        </div>
        <div className="relative flex w-[46px] shrink-0 flex-col justify-between border-l border-[#909090] pt-[26px] pb-4 whitespace-nowrap">
          <div className="absolute top-0.5 left-0 text-[11px] leading-3">
            <p className="text-[#ee1c0c]">LC:2,42</p>
            <p className="text-[#1058c8]">HC:-3,20</p>
          </div>
          {RATE_TICKS.map((t) => (
            <span key={t} className="flex items-center gap-0.5 leading-[14px]"><i className="w-[5px] border-t border-[#909090]" />{t}</span>
          ))}
          <span className="absolute top-[475px] left-1.5 text-[#1048c8]">-1,40%</span>
          <PriceBadge className="top-[445px] left-[3px] w-[42px]" />
        </div>
      </div>
      <div className="flex h-36 shrink-0 border-b border-[#909090] text-[11px]">
        <div className="flex w-[42px] shrink-0 flex-col items-end justify-between border-r border-[#909090] pt-1 pb-[15px] whitespace-nowrap">
          {SUB_LEFT.map((t, i) => (
            <span key={i} className="flex items-center gap-0.5 leading-[14px]">{t}<i className="w-[5px] border-t border-[#909090]" /></span>
          ))}
        </div>
        <div className="min-w-0 flex-1"><SubPlot /></div>
        <div className="relative flex w-[46px] shrink-0 flex-col justify-between border-l border-[#909090] pt-1 pb-[15px] whitespace-nowrap">
          {SUB_RIGHT.map((t) => (
            <span key={t} className="flex items-center gap-0.5 leading-[14px]"><i className="w-[5px] border-t border-[#909090]" />{t}</span>
          ))}
          <button type="button" aria-label="지표 닫기" className="absolute top-1 right-0.5 h-[7px] w-2 bg-[#444]"><X className="h-[7px] w-2 text-white" /></button>
        </div>
      </div>
      <div className="flex h-[17px] shrink-0">
        <div className="w-[41px] shrink-0" />
        <div className="relative flex min-w-0 flex-1">
          {TIMES.map(([t, x], i) => (
            <span
              key={x}
              className="min-w-0 basis-0 border-l border-[#909090] pl-px leading-[15px] whitespace-nowrap first:text-[13px] first:font-bold first:text-[#333]"
              style={{ flexGrow: (TIMES[i + 1]?.[1] ?? PLOT_END) - x }}
            >
              {t}
            </span>
          ))}
          <div className="absolute -top-px left-[70%] w-[137px] border border-black bg-[#ffdb70] pl-px leading-[15px] whitespace-nowrap">2025/07/15(화) 13:29:55</div>
        </div>
        <div className="w-[46px] shrink-0 border-l border-[#909090] pl-1.5 text-[11px] leading-[15px] whitespace-nowrap">15:30:1</div>
      </div>
    </main>
  );
}

function FooterIcon({ label, children, active }: { label: string; children: ReactNode; active?: boolean }) {
  return (
    <button type="button" aria-label={label} className={`flex h-[17px] w-[17px] items-center justify-center text-[#666] ${active ? "border-t border-l border-[#999] bg-white" : ""}`}>
      {children}
    </button>
  );
}

function Draw({ d }: { d: string }) {
  return <svg viewBox="0 0 14 14" className="h-3.5 w-3.5" fill="none" stroke="#777"><path d={d} /></svg>;
}

const FOOT_BTN = "flex h-[18px] w-[17px] items-center justify-center border border-t-white border-r-[#777] border-b-[#777] border-l-white bg-[#efefef] text-black";

function Footer() {
  return (
    <footer className="flex h-[18px] shrink-0 items-center bg-[#f0f0f0]">
      <button type="button" aria-label="왼쪽" className={FOOT_BTN}><svg viewBox="0 0 8 8" className="h-2 w-2"><path d="M6 0v8L2 4z" /></svg></button>
      <div className="flex h-[18px] min-w-0 flex-1 bg-[#f7f7f7]">
        <div className="ml-[35%] flex-1 border border-t-white border-r-[#777] border-b-[#777] border-l-white bg-[#efefef]" />
      </div>
      <button type="button" aria-label="재생" className={FOOT_BTN}><svg viewBox="0 0 8 8" className="h-2 w-2"><path d="M2 0v8l4-4z" /></svg></button>
      <button type="button" aria-label="뒤로" className={FOOT_BTN}><svg viewBox="0 0 10 8" className="h-2 w-2.5"><path d="M5 0v8L0 4zM10 0v8L5 4z" /></svg></button>
      <button type="button" aria-label="정지" className={FOOT_BTN}><svg viewBox="0 0 8 8" className="h-2 w-2"><path d="M1 1h6v6H1z" /></svg></button>
      <button type="button" aria-label="앞으로" className={FOOT_BTN}><svg viewBox="0 0 10 8" className="h-2 w-2.5"><path d="M0 0v8l5-4zM5 0v8l5-4z" /></svg></button>
      <div className="mr-2 ml-1.5 w-[69px]">
        <svg viewBox="0 0 69 17" className="block h-[17px] w-[69px]" shapeRendering="crispEdges">
          <path d="M0 5h43M48 5h21" stroke="#888" strokeWidth="2" />
          <path d="M43 2h4v7l-2 2-2-2z" fill="#eee" stroke="#888" />
          <path d="M2 14v3M9 14v3M15 14v3M22 14v3M28 14v3M35 14v3M41 14v3M48 14v3M54 14v3M61 14v3M67 14v3" stroke="#000" />
        </svg>
      </div>
      <div className="flex">
        <FooterIcon label="창 추가"><Draw d="M1 1h9v9H1zM7 7h6v6H7zM7 10h6M10 7v6" /></FooterIcon>
        <FooterIcon label="창 복사"><Draw d="M1 1h8v7H1zM5 5h8v8H5z" /></FooterIcon>
        <FooterIcon label="영역"><Draw d="M1 2h12M1 12h12M1 9l3-3 2 2 4-4 3 3" /></FooterIcon>
        <FooterIcon label="십자선" active><Draw d="M1 4h12M4 1v12M5 5l6 6M5 5h4M5 5v4" /></FooterIcon>
        <FooterIcon label="가로선"><Draw d="M0 3h14M1 12l4-6 3 4 3-5 2 4" /></FooterIcon>
        <FooterIcon label="세로선"><Draw d="M4 0v14M1 12l4-6 3 4 3-5 2 4" /></FooterIcon>
        <FooterIcon label="추세선"><Draw d="M1 13L13 1M1 11l4-5 3 4 3-4 2 4" /></FooterIcon>
        <FooterIcon label="모두 지우기"><Eraser className="h-3.5 w-3.5" /></FooterIcon>
        <FooterIcon label="차트 겹치기"><Draw d="M5 1h8v7H5zM1 5h9v8H1zM2 10l2-2 2 2 3-3" /></FooterIcon>
        <FooterIcon label="확대경"><Search className="h-3.5 w-3.5" /></FooterIcon>
        <FooterIcon label="축소"><Minus className="h-3.5 w-3.5" strokeWidth={4} /></FooterIcon>
        <FooterIcon label="확대"><Plus className="h-3.5 w-3.5" strokeWidth={4} /></FooterIcon>
        <FooterIcon label="글자"><b className="text-[14px] leading-none">A</b></FooterIcon>
      </div>
    </footer>
  );
}

export default function App() {
  return (
    <div className='flex h-screen min-h-[600px] flex-col bg-black px-px pt-px pb-1 font-["Liberation_Sans","Noto_Sans_CJK_KR",sans-serif] text-black'>
      <TitleBar />
      <div className="mr-0.5 ml-px flex min-h-0 flex-1 flex-col bg-[#d0d0d0] px-1 pb-px">
        <div className="flex flex-col gap-[3px] overflow-hidden pt-[5px] pb-[3px]">
          <Toolbar />
          <QuoteBar />
        </div>
        <Chart />
        <Footer />
      </div>
    </div>
  );
}
